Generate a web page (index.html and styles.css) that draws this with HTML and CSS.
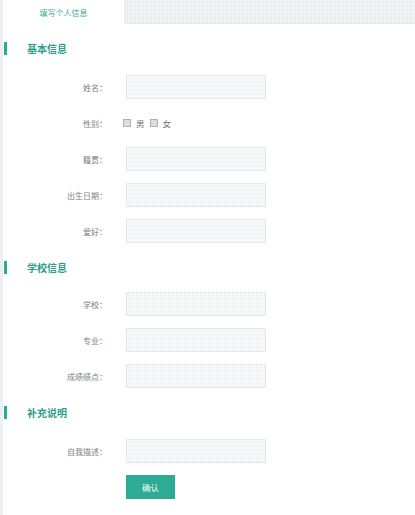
FILE: index.html
```html
<!DOCTYPE html>
<html lang="zh">
<head>
<meta charset="utf-8">
<link rel="stylesheet" href="styles.css">
</head>
<body>
<div class="page">
  <div class="tabs">
    <div class="tab active">填写个人信息</div>
    <div class="tab-rest"></div>
  </div>

  <div class="section first">
    <h2 class="sec-title">基本信息</h2>
    <div class="row"><span class="label">姓名：</span><span class="field"></span></div>
    <div class="row"><span class="label">性别：</span>
      <span class="radios"><span class="box"></span><span class="opt">男</span><span class="box"></span><span class="opt">女</span></span>
    </div>
    <div class="row"><span class="label">籍贯：</span><span class="field"></span></div>
    <div class="row"><span class="label">出生日期：</span><span class="field"></span></div>
    <div class="row"><span class="label">爱好：</span><span class="field"></span></div>
  </div>

  <div class="section">
    <h2 class="sec-title">学校信息</h2>
    <div class="row"><span class="label">学校：</span><span class="field"></span></div>
    <div class="row"><span class="label">专业：</span><span class="field"></span></div>
    <div class="row"><span class="label">成绩绩点：</span><span class="field"></span></div>
  </div>

  <div class="section last">
    <h2 class="sec-title">补充说明</h2>
    <div class="row"><span class="label">自我描述：</span><span class="field"></span></div>
    <div class="row"><span class="label"></span><span class="btn">确认</span></div>
  </div>
</div>
</body>
</html>
```

FILE: styles.css
```css
html, body {
  margin: 0;
  padding: 0;
  background: #ffffff;
}
body {
  font-family: "Noto Sans CJK SC", "Noto Sans", sans-serif;
  color: #777b80;
}
.page {
  width: 415px;
  min-height: 515px;
  box-sizing: border-box;
  border-left: 3px solid #eceef1;
}
.tabs {
  display: flex;
  height: 24px;
}
.tab {
  width: 121px;
  display: flex;
  align-items: center;
  justify-content: center;
  font-size: 8px;
  color: #3aa994;
  background: #fff;
}
.tab-rest {
  flex: 1;
  background-color: #f1f2f4;
  background-image: radial-gradient(circle, #dfe2e6 0.6px, transparent 0.8px);
  background-size: 4px 4px;
  border-bottom: 1px solid #e4e6ea;
  border-left: 1px solid #e8eaed;
  box-sizing: border-box;
}
.section {
  margin-top: 6px;
}
.section.first {
  margin-top: 12px;
}
.sec-title {
  margin: 0 0 7px 0;
  height: 24px;
  display: flex;
  align-items: center;
  font-size: 10px;
  font-weight: bold;
  color: #2e9e89;
  padding-left: 24px;
  position: relative;
}
.first .sec-title {
  margin-bottom: 9px;
}
.last .sec-title {
  margin-bottom: 9px;
}
.sec-title::before {
  content: "";
  position: absolute;
  left: 1px;
  top: 6px;
  width: 3px;
  height: 13px;
  background: #2aab93;
}
.row {
  height: 36px;
  display: flex;
  align-items: center;
}
.label {
  width: 104px;
  text-align: right;
  font-size: 8px;
  color: #7a7e83;
  margin-right: 19px;
  flex: none;
}
.field {
  width: 140px;
  height: 24px;
  box-sizing: border-box;
  border: 1px solid #e3e6ea;
  background-color: #f7f8fa;
  background-image: radial-gradient(circle, #e6e9ed 0.6px, transparent 0.8px);
  background-size: 4px 4px;
}
.radios {
  display: flex;
  align-items: center;
  font-size: 8.5px;
  color: #6f7378;
  margin-left: -3px;
}
.box {
  width: 6px;
  height: 6px;
  border: 1px solid #aab3b8;
  background: #d9dfe2;
  margin-right: 5px;
}
.opt {
  margin-right: 5px;
}
.btn {
  width: 49px;
  height: 24px;
  display: flex;
  align-items: center;
  justify-content: center;
  background: #2dab94;
  color: #ffffff;
  font-size: 8.5px;
}
```
